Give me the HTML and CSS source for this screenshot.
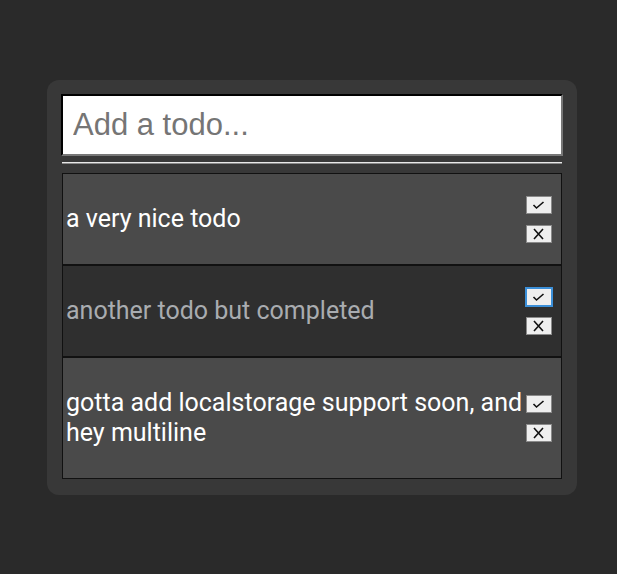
FILE: index.html
```html
<!DOCTYPE html>
<html>
<head>
<meta charset="utf-8">
<link rel="stylesheet" href="styles.css">
</head>
<body>
<div class="card">
  <input class="new-todo" type="text" placeholder="Add a todo...">
  <hr class="divider">
  <ul class="todos">
    <li class="todo light">
      <span class="text">a very nice todo</span>
      <div class="actions">
        <button class="btn" aria-label="complete"><svg viewBox="0 0 24 16" width="24" height="16"><path d="M6.5 8 L9.5 11 L16.5 5" class="ic"/></svg></button>
        <button class="btn" aria-label="delete"><svg viewBox="0 0 24 16" width="24" height="16"><path d="M7 3 L16 13 M16 3 L7 13" class="ic"/></svg></button>
      </div>
    </li>
    <li class="todo dark done">
      <span class="text">another todo but completed</span>
      <div class="actions">
        <button class="btn focused" aria-label="complete"><svg viewBox="0 0 24 16" width="24" height="16"><path d="M6.5 8 L9.5 11 L16.5 5" class="ic"/></svg></button>
        <button class="btn" aria-label="delete"><svg viewBox="0 0 24 16" width="24" height="16"><path d="M7 3 L16 13 M16 3 L7 13" class="ic"/></svg></button>
      </div>
    </li>
    <li class="todo light">
      <span class="text">gotta add localstorage support soon, and hey multiline</span>
      <div class="actions">
        <button class="btn" aria-label="complete"><svg viewBox="0 0 24 16" width="24" height="16"><path d="M6.5 8 L9.5 11 L16.5 5" class="ic"/></svg></button>
        <button class="btn" aria-label="delete"><svg viewBox="0 0 24 16" width="24" height="16"><path d="M7 3 L16 13 M16 3 L7 13" class="ic"/></svg></button>
      </div>
    </li>
  </ul>
</div>
</body>
</html>
```
FILE: styles.css
```css
html, body {
  margin: 0;
  padding: 0;
  background: #2a2a2a;
}
body {
  padding: 80px 0 0 47px;
  font-family: Roboto, "Liberation Sans", sans-serif;
}
.card {
  width: 502px;
  padding: 14px 14px 16px;
  background: #383838;
  border-radius: 12px;
}
.new-todo {
  display: block;
  box-sizing: border-box;
  width: 502px;
  height: 62px;
  margin: 0;
  padding: 0 10px;
  border: 2px inset #767676;
  border-color: #000 #777 #777 #000;
  background: #fff;
  font-family: "Liberation Sans", Arial, sans-serif;
  font-size: 31px;
  color: #000;
  outline: none;
}
.new-todo::placeholder {
  color: #757575;
}
.divider {
  margin: 6px 1px 9px 1px;
  border: 0;
  border-top: 1px solid #e8e8e8;
  border-bottom: 1px solid #8a8a8a;
  height: 0;
}
.todos {
  list-style: none;
  margin: 0 1px;
  padding: 0;
}
.todo {
  display: flex;
  align-items: center;
  justify-content: space-between;
  border: 1px solid #111;
  padding: 0 9px 0 3px;
  font-size: 25px;
  line-height: 30px;
  color: #fff;
}
.text {
  padding: 30px 0;
}
.todo.light { background: #4a4a4a; }
.todo.dark { background: #2f2f2f; }
.todo.done .text { color: #a9acb0; }
.actions {
  display: flex;
  flex-direction: column;
  gap: 11px;
  flex-shrink: 0;
}
.btn {
  display: block;
  box-sizing: border-box;
  width: 26px;
  height: 18px;
  padding: 0;
  margin: 0;
  border: 1px solid #8a8a8a;
  background: #efefef;
}
.btn svg {
  display: block;
}
.ic {
  fill: none;
  stroke: #111;
  stroke-width: 1.6;
}
.btn.focused {
  border-color: #3b8fd8;
  outline: 1px solid #3b8fd8;
}
```
